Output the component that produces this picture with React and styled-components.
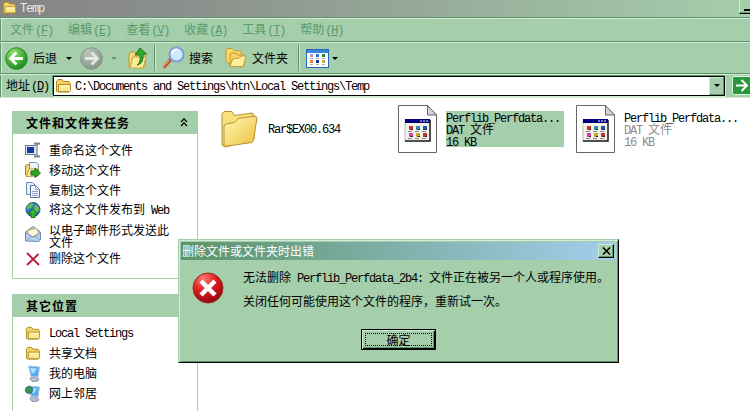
import React from "react";
import styled, { createGlobalStyle, css } from "styled-components";

const face = "#a5ceab";
const shade = "#5f956c";
const light = "#d3ead6";

const GlobalStyle = createGlobalStyle`
  * {
    box-sizing: border-box;
  }

  body {
    margin: 0;
    overflow: hidden;
    background: #fff;
    font-family: "Noto Sans CJK SC", sans-serif;
    font-size: 12px;
    line-height: 12px;
    color: #000;
  }
`;

const Window = styled.div`
  position: relative;
  display: flex;
  flex-direction: column;
  width: 750px;
  height: 411px;
  overflow: hidden;
  white-space: pre;
`;

const Latin = styled.span`
  font-family: "Liberation Mono", monospace;
  font-size: 12px;
  letter-spacing: -1.2px;
`;

const TitleBar = styled.div`
  display: flex;
  flex: none;
  align-items: flex-start;
  height: 17px;
  padding-left: 2px;
  background: linear-gradient(90deg, #848484, #8b908c 25%, #a5ceab);
  color: #e3ece4;
`;

const TitleText = styled.div`
  flex: 1;
  padding: 1px 0 0 3px;
`;

const MinButton = styled.div`
  width: 11px;
  height: 14px;
  padding: 9px 0 0 4px;
  background: ${face};
  border-left: 1px solid ${light};
  border-bottom: 1px solid #000;
  box-shadow: inset 0 -1px ${shade};

  &::before {
    content: "";
    display: block;
    width: 6px;
    height: 2px;
    background: #000;
  }
`;

const Band = styled.div`
  display: flex;
  flex: none;
  align-items: center;
  height: ${(props) => props.$height}px;
  background: ${face};
  border-top: 1px solid ${shade};
  box-shadow: inset 0 1px ${light}, inset 1px 0 ${shade}, inset 2px 0 ${light};
`;

const MenuBar = styled(Band)`
  gap: 15px;
  padding: 1px 0 0 10px;
  color: #5b9a6b;
`;

const ToolBar = styled(Band)`
  padding: 1px 0 0 5px;
`;

const ToolLabel = styled.span`
  margin: 0 ${(props) => props.$right}px 0 ${(props) => props.$left}px;
`;

const Caret = styled.span`
  border: 3px solid transparent;
  border-top-color: ${(props) => props.$color || "#000"};
  border-bottom: 0;
  margin: 0 ${(props) => props.$right || 0}px 0
    ${(props) => props.$left || 0}px;
`;

const Divider = styled.span`
  width: 2px;
  height: 26px;
  margin: 0 ${(props) => props.$right}px 0 ${(props) => props.$left}px;
  border-left: 1px solid ${shade};
  border-right: 1px solid ${light};
`;

const AddressBar = styled(Band)`
  padding: 1px 0 1px 6px;
  border-bottom: 1px solid ${light};
`;

const AddressLabel = styled.div`
  width: 47px;
`;

const AddressField = styled.div`
  display: flex;
  align-items: center;
  width: 673px;
  height: 20px;
  padding-left: 1px;
  background: #fff;
  border: 1px solid #000;
  box-shadow: 1px 1px ${light}, -1px -1px ${shade};

  ${Latin} {
    flex: 1;
    padding: 2px 0 0 3px;
  }
`;

const DropButton = styled.div`
  display: flex;
  align-items: center;
  justify-content: center;
  width: 15px;
  height: 18px;
  background: ${face};
  border: 1px solid ${light};
  border-right-color: ${shade};
  border-bottom-color: ${shade};
`;

const GoButton = styled.div`
  display: flex;
  width: 18px;
  height: 19px;
  margin-left: 7px;
`;

const Content = styled.div`
  flex: 1;
  display: flex;
  align-items: flex-start;
  background: #fff;
`;

const SideBar = styled.div`
  display: flex;
  flex: none;
  flex-direction: column;
  gap: 15px;
  width: 186px;
  margin: 13px 0 0 12px;
`;

const Panel = styled.div`
  border: 1px solid ${face};
  border-top: 0;
  height: ${(props) => props.$height}px;
`;

const PanelHeader = styled.div`
  display: flex;
  align-items: center;
  justify-content: space-between;
  height: 23px;
  padding: 0 10px 0 14px;
  margin: 0 -1px;
  background: ${face};
  font-weight: bold;
  letter-spacing: 1px;
`;

const PanelRows = styled.div`
  padding: 6px 0 0 12px;
`;

const PanelRow = styled.div`
  display: flex;
  align-items: center;
  gap: 8px;
  height: ${(props) => (props.$tall ? 28 : 20)}px;

  svg {
    flex: none;
  }
`;

const TallText = styled.div`
  padding-top: 4px;
`;

const FileArea = styled.div`
  display: flex;
  align-items: flex-start;
  padding: 7px 0 0 22px;
`;

const FileItem = styled.div`
  display: flex;
  flex: none;
  align-items: center;
  width: 178px;
  height: 48px;

  svg {
    flex: none;
  }
`;

const FileText = styled.div`
  width: 118px;
  margin-left: 9px;
  color: ${(props) => (props.$dim ? "#8c8c8c" : "#000")};
  ${(props) =>
    props.$selected &&
    css`
      background: ${face};
    `}

  > div {
    height: 12px;
    line-height: 11px;
  }

  > div:first-child {
    color: #000;
  }
`;

const Dialog = styled.div`
  position: absolute;
  left: 178px;
  top: 239px;
  width: 441px;
  height: 124px;
  padding: 2px;
  background: ${face};
  border: 1px solid ${face};
  border-right-color: #000;
  border-bottom-color: #000;
  box-shadow: inset 1px 1px ${light}, inset -1px -1px ${shade};
`;

const DialogTitle = styled.div`
  display: flex;
  align-items: center;
  justify-content: space-between;
  height: 18px;
  padding: 0 2px 0 1px;
  background: linear-gradient(90deg, #5c946a, #a2ceec);
  color: #fff;
`;

const CloseButton = styled.div`
  display: flex;
  align-items: center;
  justify-content: center;
  width: 16px;
  height: 14px;
  background: ${face};
  border: 1px solid ${light};
  border-right-color: #000;
  border-bottom-color: #000;
  box-shadow: inset -1px -1px ${shade};
`;

const DialogBody = styled.div`
  display: flex;
  align-items: flex-start;
  gap: 19px;
  height: 69px;
  padding: 12px 0 0 11px;
`;

const Message = styled.div`
  margin-top: -7px;

  > div {
    height: 24px;
    line-height: 24px;
  }
`;

const OkButton = styled.div`
  width: 75px;
  height: 21px;
  margin: 0 auto;
  padding: 3px;
  border: 1px solid #000;
  box-shadow: inset 1px 1px ${light}, inset -1px -1px #000,
    inset -2px -2px ${shade};
`;

const OkFocus = styled.div`
  display: flex;
  align-items: center;
  justify-content: center;
  height: 13px;
  border: 1px dotted #000;
`;

const KeyHint = styled(Latin)`
  margin-left: 1px;
`;

// Latin runs are half the width of a Chinese character
const Text = ({ children }) =>
  children
    .split(/([\x20-\x7e]+)/)
    .map((part, i) => (i % 2 ? <Latin key={i}>{part}</Latin> : part));

const Hotkey = ({ name, letter }) => (
  <span>
    {name}
    <KeyHint>
      (<u>{letter}</u>)
    </KeyHint>
  </span>
);

const SmallFolder = ({ size = 17 }) => (
  <svg width={size} height={size} viewBox="0 0 17 17">
    <path
      d="M1.500 14V4.500l1.500-2h4l1.500 2h5.500l1 1.500v8l-1 1H2.500z"
      fill="#f5d463"
      stroke="#b08a1c"
    />
    <path d="M3.500 14.500V7.500h12v6l-1 1z" fill="#fbe892" stroke="#b5902a" />
    <path d="M5 9h9" stroke="#fff8cf" />
  </svg>
);

const BigFolder = () => (
  <svg width="39" height="38" viewBox="0 0 38 38">
    <defs>
      <linearGradient id="folder" x1="0" y1="0" x2="1" y2="1">
        <stop offset="0" stopColor="#fffab8" />
        <stop offset="1" stopColor="#efbe3b" />
      </linearGradient>
    </defs>
    <path
      d="M1.500 35V4l2-2.500h8l2.500 4 18-2.500 1.500 3v23L5 37z"
      fill="#f8e07c"
      stroke="#b6902f"
    />
    <path
      d="M3.500 36.500V16.500l1.500-2.500 9-1.500 3.500-4 17-2.500 2 1.500-3.500 23-1.500 2z"
      fill="url(#folder)"
      stroke="#b6902f"
    />
  </svg>
);

const DatIcon = () => (
  <svg width="39" height="48" viewBox="0 0 39 48">
    <path d="M.5.500h29l9 9.500v37.500H.5z" fill="#fff" stroke="#666" />
    <path d="M29.500.500V10h9z" fill="#d4d4d4" stroke="#666" />
    <rect x="7" y="15" width="25" height="21" fill="#f1f1e8" stroke="#bbb" />
    <path d="M7 36h25V15" fill="none" stroke="#222" strokeWidth="1.500" />
    <rect x="7" y="14" width="25" height="4" fill="#000080" />
    <path d="M22 16h2m1 0h2m1 0h2" stroke="#fff" />
    {["#c33", "#288fb5", "#2450bd", "#cc44b0", "#b8ae22", "#b73636"].map(
      (color, i) => (
        <g key={color} transform={`translate(${(i % 3) * 7} ${i > 2 ? 7 : 0})`}>
          <rect x="11" y="21" width="4" height="4" fill={color} />
          <path d="M13 24.500h2" stroke="#222" />
          <path d="M10 26.500h4" stroke="#888" />
        </g>
      )
    )}
  </svg>
);

const RoundArrow = ({ forward }) => (
  <svg width="23" height="23" viewBox="0 0 23 23">
    <defs>
      <radialGradient id={forward ? "fwd" : "back"} cx=".35" cy=".25" r=".8">
        <stop offset="0" stopColor={forward ? "#bdc5bf" : "#93e26a"} />
        <stop offset="1" stopColor={forward ? "#879389" : "#128a18"} />
      </radialGradient>
    </defs>
    <circle
      cx="11.500"
      cy="11.500"
      r="10.800"
      fill={forward ? "url(#fwd)" : "url(#back)"}
      stroke={forward ? "#87988b" : "#278b2c"}
    />
    <path
      d={
        forward
          ? "M5 11.500h12M11.500 5.500l6 6-6 6"
          : "M18 11.500H6M11.500 5.500l-6 6 6 6"
      }
      fill="none"
      stroke={forward ? "#e3e8e4" : "#fff"}
      strokeWidth="2.800"
    />
  </svg>
);

const UpFolder = () => (
  <svg width="20" height="22" viewBox="0 0 20 22">
    <path
      d="M1 20V7l1.500-2H7l1 2h9v11l-2 3z"
      fill="#f5d773"
      stroke="#b99a37"
    />
    <path d="M2 21L5 10h13l-3 11z" fill="#fdeb97" stroke="#c8a547" />
    <path
      d="M9 18c3-2 3.500-5 3-10H7L12 1l6.500 6h-3.500c.5 6-1 10-6 11z"
      fill="#31ad2c"
      stroke="#167619"
    />
  </svg>
);

const Magnifier = () => (
  <svg width="24" height="24" viewBox="0 0 24 24">
    <path d="M2.500 21.500L10 13" stroke="#b65331" strokeWidth="3.500" />
    <path d="M2 20.500L8 14" stroke="#efa87b" strokeWidth="1.500" />
    <circle cx="15.500" cy="8.500" r="7" fill="#ccecff" stroke="#7e9ed1" strokeWidth="2" />
    <path d="M11 8c0-3 2-4.500 5-4.500" fill="none" stroke="#fff" strokeWidth="2" />
  </svg>
);

const Folders = () => (
  <svg width="22" height="20" viewBox="0 0 22 20">
    <path d="M1 13V2l2-1.500h4l2 2 7 .5v11l-13 1z" fill="#f7d969" stroke="#c19c33" />
    <path d="M5 18V6l2-1h4l1.500 2H19v11l-2 1z" fill="#f6d463" stroke="#bd962c" />
    <path d="M5 18.500L7.500 11l7-1 1.500-2h5l-3 10.500z" fill="#fff0a0" stroke="#c49e34" />
  </svg>
);

const ViewsIcon = () => (
  <svg width="23" height="19" viewBox="0 0 23 19" display="block">
    <rect x=".5" y=".5" width="22" height="18" fill="#fff" stroke="#2566bb" />
    <rect x="1" y="1" width="21" height="3" fill="#3c84d8" />
    {["#a79ac9", "#3b70c5", "#278b35", "#e5834b", "#173b91", "#c9aa32"].map(
      (color, i) => (
        <g key={color} transform={`translate(${(i % 3) * 6} ${i > 2 ? 6 : 0})`}>
          <rect x="4" y="5" width="3" height="3" fill={color} />
          <path d="M4 9.500h3" stroke="#aaa" />
        </g>
      )
    )}
  </svg>
);

const GoIcon = () => (
  <svg width="18" height="19" viewBox="0 0 18 19">
    <rect x=".5" y=".5" width="20" height="18" rx="2" fill="#279938" stroke="#e5f7e6" />
    <path d="M4 9.500h11M9.500 4l5.500 5.500-5.500 5.500" fill="none" stroke="#fff" strokeWidth="2" />
  </svg>
);

const Chevrons = () => (
  <svg width="8" height="9" viewBox="0 0 8 9">
    <path d="M1 4l3-3 3 3M1 8l3-3 3 3" fill="none" stroke="#000" strokeWidth="1.300" />
  </svg>
);

const RenameIcon = () => (
  <svg width="16" height="16" viewBox="0 0 16 16">
    <rect x=".5" y="3.500" width="11" height="9" fill="#dce3f3" stroke="#697796" />
    <rect x="2" y="5" width="7" height="6" fill="#123ba8" />
    <path d="M9 1.500h2l1 1 1-1h2M12 2v12M9 14.500h2l1-1 1 1h2" fill="none" stroke="#777e96" strokeWidth="2" />
    <path d="M12 3v10" stroke="#dde1ec" />
  </svg>
);

const MoveIcon = () => (
  <svg width="16" height="16" viewBox="0 0 16 16">
    <path d="M.5 13V4L2 2.500h3L6.500 4v10H2z" fill="#f3d36a" stroke="#a48533" />
    <path d="M4.500.500h7l2 2.500v9h-9z" fill="#edf3fc" stroke="#8393ab" />
    <path d="M1 14.500L4 7h9v7z" fill="#fae69a" stroke="#ba9c44" />
    <path d="M6 9h4V6l5.500 5L10 15.500V13H6z" fill="#2ba829" stroke="#15741b" />
  </svg>
);

const CopyIcon = () => (
  <svg width="16" height="16" viewBox="0 0 16 16">
    <path d="M1.500.500h6l3 3v9h-9z" fill="#e7f0fc" stroke="#7189a9" />
    <path d="M5.500 3.500h5l4 4v8h-9z" fill="#eff6ff" stroke="#5c7799" />
    <path d="M10.500 3.500v4h4M7 9.500h6m-6 2h6m-6 2h6" fill="none" stroke="#86a6cf" />
  </svg>
);

const GlobeIcon = () => (
  <svg width="16" height="16" viewBox="0 0 16 16">
    <circle cx="8" cy="7.500" r="7" fill="#2e72c4" stroke="#245596" />
    <path d="M2 4l4-3 3 1-2 3-3 2-2 1zM10 2l4 3v4l-3 1-2-3z" fill="#68bd57" />
    <path d="M8 7l5 5h-3v3.500H6V12H3z" fill="#39b535" stroke="#157b1b" />
  </svg>
);

const MailIcon = () => (
  <svg width="16" height="16" viewBox="0 0 16 16">
    <path d="M.5 15V6L8 .500 15.500 6v8l-2 1.500z" fill="#b8d1ef" stroke="#7189ae" />
    <path d="M3 8V4l9-1.500L13.500 8 8 11z" fill="#fff5d8" stroke="#c9a269" />
    <path d="M1 7l7 4 7-4M1 15l6-5m8 4l-5-4" fill="none" stroke="#7f9bc0" />
  </svg>
);

const DeleteIcon = () => (
  <svg width="16" height="16" viewBox="0 0 16 16">
    <path d="M2 3l12 12M13.500 4L2 15" fill="none" stroke="#bd1f40" strokeWidth="1.900" />
  </svg>
);

const ComputerIcon = ({ network }) => (
  <svg width="16" height="17" viewBox="0 0 16 17">
    <path d="M6 12h6l2 3-3 1.500H7L5 14z" fill="#b9bdd2" stroke="#8f94ad" />
    <path d="M3.500 1l11 1-1.500 10-7-1z" fill="#53a9ed" stroke="#b4c2de" />
    <path d="M5 3l7 .5-3 5-2.500-1z" fill="#a8ddff" />
    {network && <circle cx="4" cy="5" r="3.500" fill="#3d9558" stroke="#246d70" />}
  </svg>
);

const ErrorIcon = () => (
  <svg width="32" height="32" viewBox="0 0 32 32">
    <defs>
      <radialGradient id="error" cx=".35" cy=".2" r=".85">
        <stop offset="0" stopColor="#ff7d70" />
        <stop offset=".5" stopColor="#dc1b20" />
        <stop offset="1" stopColor="#8d050b" />
      </radialGradient>
    </defs>
    <circle cx="16" cy="16" r="15" fill="url(#error)" stroke="#9c2325" />
    <path d="M9 9l14 14M23 9L9 23" stroke="#fff" strokeWidth="4.500" />
  </svg>
);

const CloseIcon = () => (
  <svg width="9" height="8" viewBox="0 0 9 8">
    <path d="M1 .5l7 7M8 .5l-7 7" stroke="#000" strokeWidth="1.600" />
  </svg>
);

const menus = [
  ["文件", "F"],
  ["编辑", "E"],
  ["查看", "V"],
  ["收藏", "A"],
  ["工具", "T"],
  ["帮助", "H"],
];

const tasks = [
  [RenameIcon, "重命名这个文件"],
  [MoveIcon, "移动这个文件"],
  [CopyIcon, "复制这个文件"],
  [GlobeIcon, "将这个文件发布到 Web"],
  [MailIcon, "以电子邮件形式发送此\n文件"],
  [DeleteIcon, "删除这个文件"],
];

const places = [
  [SmallFolder, "Local Settings"],
  [SmallFolder, "共享文档"],
  [ComputerIcon, "我的电脑"],
  [() => <ComputerIcon network />, "网上邻居"],
];

const SidePanel = ({ title, rows, height }) => (
  <Panel $height={height}>
    <PanelHeader>
      {title}
      <Chevrons />
    </PanelHeader>
    <PanelRows>
      {rows.map(([Icon, label]) => {
        const tall = label.includes("\n");
        return (
          <PanelRow key={label} $tall={tall}>
            <Icon size={16} />
            {tall ? (
              <TallText>{label}</TallText>
            ) : (
              <span>
                <Text>{label}</Text>
              </span>
            )}
          </PanelRow>
        );
      })}
    </PanelRows>
  </Panel>
);

const DatFile = ({ selected }) => (
  <FileItem>
    <DatIcon />
    <FileText $selected={selected} $dim={!selected}>
      <div>
        <Text>Perflib_Perfdata...</Text>
      </div>
      <div>
        <Text>DAT 文件</Text>
      </div>
      <div>
        <Text>16 KB</Text>
      </div>
    </FileText>
  </FileItem>
);

const App = () => (
  <Window>
    <GlobalStyle />
    <TitleBar>
      <SmallFolder size={15} />
      <TitleText>
        <Text>Temp</Text>
      </TitleText>
      <MinButton />
    </TitleBar>
    <MenuBar $height={24}>
      {menus.map(([name, letter]) => (
        <Hotkey key={letter} name={name} letter={letter} />
      ))}
    </MenuBar>
    <ToolBar $height={32}>
      <RoundArrow />
      <ToolLabel $left={5} $right={9}>
        后退
      </ToolLabel>
      <Caret $right={8} />
      <RoundArrow forward />
      <Caret $color={shade} $left={8} $right={11} />
      <UpFolder />
      <Divider $left={6} $right={5} />
      <Magnifier />
      <ToolLabel $left={4} $right={12}>
        搜索
      </ToolLabel>
      <Folders />
      <ToolLabel $left={5} $right={10}>
        文件夹
      </ToolLabel>
      <Divider $left={0} $right={6} />
      <ViewsIcon />
      <Caret $left={3} />
    </ToolBar>
    <AddressBar $height={25}>
      <AddressLabel>
        <Hotkey name="地址" letter="D" />
      </AddressLabel>
      <AddressField>
        <SmallFolder />
        <Latin>C:\Documents and Settings\htn\Local Settings\Temp</Latin>
        <DropButton>
          <Caret />
        </DropButton>
      </AddressField>
      <GoButton>
        <GoIcon />
      </GoButton>
    </AddressBar>
    <Content>
      <SideBar>
        <SidePanel title="文件和文件夹任务" rows={tasks} height={168} />
        <SidePanel title="其它位置" rows={places} height={140} />
      </SideBar>
      <FileArea>
        <FileItem>
          <BigFolder />
          <FileText>
            <Text>Rar$EX00.634</Text>
          </FileText>
        </FileItem>
        <DatFile selected />
        <DatFile />
      </FileArea>
    </Content>
    <Dialog>
      <DialogTitle>
        删除文件或文件夹时出错
        <CloseButton>
          <CloseIcon />
        </CloseButton>
      </DialogTitle>
      <DialogBody>
        <ErrorIcon />
        <Message>
          <div>
            <Text>
              无法删除 Perflib_Perfdata_2b4: 文件正在被另一个人或程序使用。
            </Text>
          </div>
          <div>关闭任何可能使用这个文件的程序，重新试一次。</div>
        </Message>
      </DialogBody>
      <OkButton>
        <OkFocus>确定</OkFocus>
      </OkButton>
    </Dialog>
  </Window>
);

export default App;
